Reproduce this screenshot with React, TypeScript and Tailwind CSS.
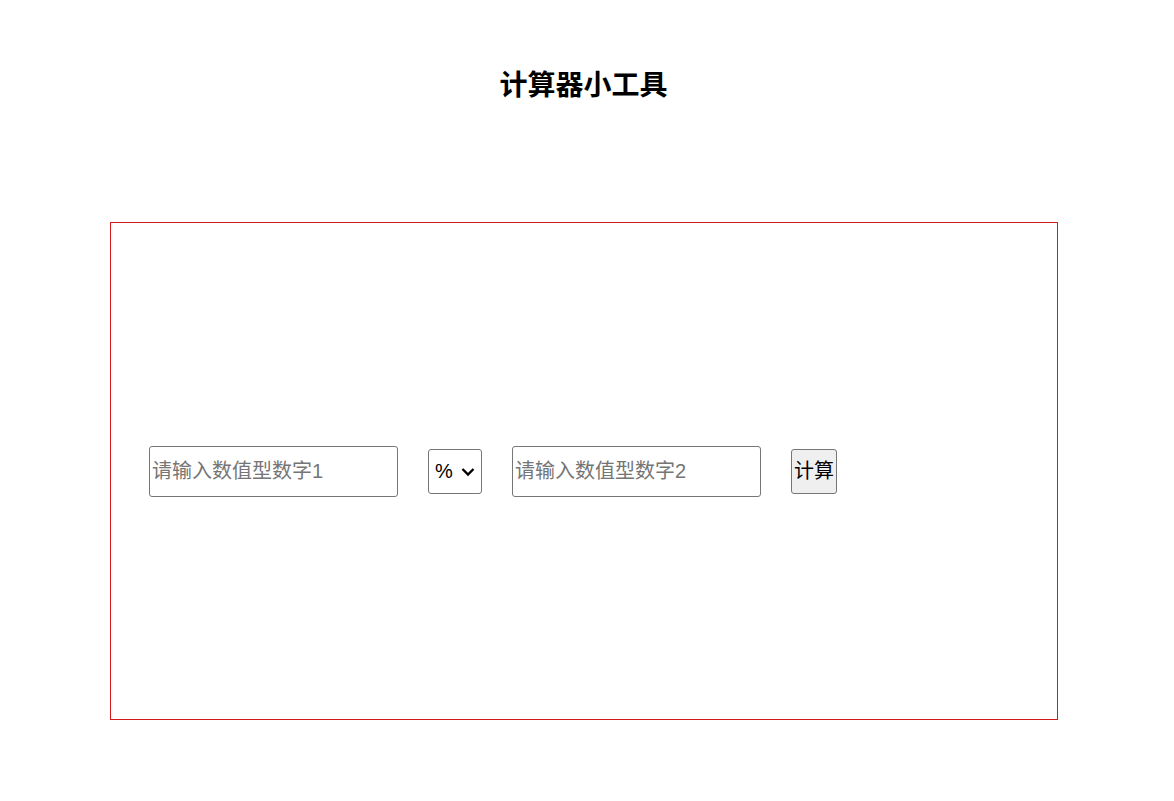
import { useState } from 'react';

const font = { fontFamily: '"Liberation Sans", "Noto Sans CJK SC", sans-serif' };

const App = () => {
    const [a, setA] = useState('');
    const [op, setOp] = useState('%');
    const [b, setB] = useState('');

    return (
        <div className="min-h-[801px] bg-white text-black" style={font}>
            {/* Title */}
            <h1 className="pt-[66px] pr-[7px] text-center text-[28px] font-bold leading-[40px]">计算器小工具</h1>

            {/* Calculator box */}
            <div className="mx-[110px] mt-[116px] flex h-[498px] w-[948px] items-center border border-[#d11a1a] pl-[38px]">
                <div className="flex items-center gap-[30px]">
                    <input
                        type="text"
                        value={a}
                        onChange={(e) => setA(e.target.value)}
                        placeholder="请输入数值型数字1"
                        className="h-[51px] w-[249px] rounded-[3px] border border-[#767676] px-[2px] text-[20px] outline-none placeholder:text-[#757575]"
                    />
                    <div className="relative">
                        <select
                            value={op}
                            onChange={(e) => setOp(e.target.value)}
                            className="h-[45px] w-[54px] appearance-none rounded-[3px] border border-[#767676] bg-white pl-[6px] text-[20px] outline-none"
                        >
                            <option value="+">+</option>
                            <option value="-">-</option>
                            <option value="*">*</option>
                            <option value="/">/</option>
                            <option value="%">%</option>
                        </select>
                        <svg
                            className="pointer-events-none absolute right-[7px] top-[18px]"
                            width="14"
                            height="10"
                            viewBox="0 0 14 10"
                            fill="none"
                        >
                            <path d="M1.5 2l5.5 5.5 5.5-5.5" stroke="#000" strokeWidth="2.4" />
                        </svg>
                    </div>
                    <input
                        type="text"
                        value={b}
                        onChange={(e) => setB(e.target.value)}
                        placeholder="请输入数值型数字2"
                        className="h-[51px] w-[249px] rounded-[3px] border border-[#767676] px-[2px] text-[20px] outline-none placeholder:text-[#757575]"
                    />
                    <button className="h-[45px] w-[46px] rounded-[3px] border border-[#767676] bg-[#efefef] text-[20px]">
                        计算
                    </button>
                </div>
            </div>
        </div>
    );
};

export default App;
